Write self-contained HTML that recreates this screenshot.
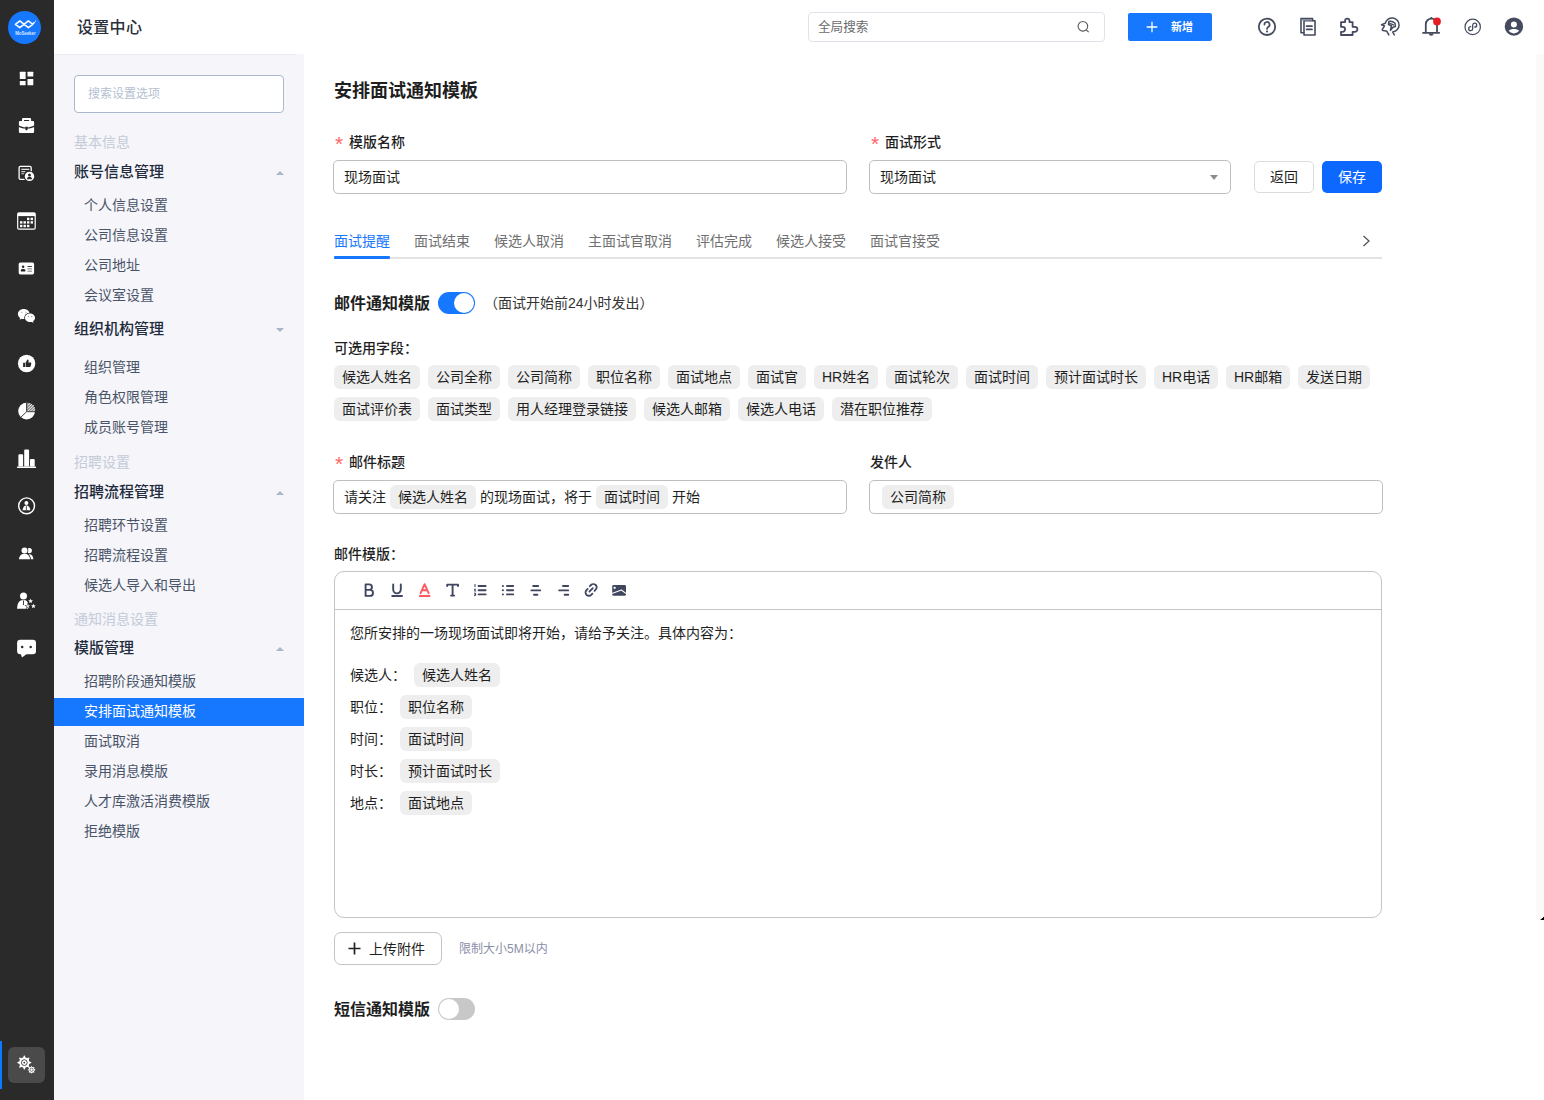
<!DOCTYPE html>
<html lang="zh-CN">
<head>
<meta charset="utf-8">
<title>设置中心</title>
<style>
*{box-sizing:border-box;margin:0;padding:0}
html,body{width:1544px;height:1100px;overflow:hidden;background:#fff}
body{font-family:"Liberation Sans","Noto Sans CJK SC",sans-serif;font-size:14px;color:#1f1f1f;position:relative}
.abs{position:absolute}
/* left dark nav */
#nav{position:absolute;left:0;top:0;width:54px;height:1100px;background:#2a2a2a}
#nav svg{position:absolute;display:block}
#logo{position:absolute;left:8px;top:11px;width:33px;height:33px;border-radius:50%;background:#1677ff}
#navact{position:absolute;left:8px;top:1047px;width:37px;height:36px;border-radius:6px;background:#4a4a4a}
#navbar{position:absolute;left:0;top:1041px;width:2px;height:48px;background:#0a7cff}
/* header */
#hdr{position:absolute;left:54px;top:0;width:1490px;height:54px;background:#fff}
#hdr h1{position:absolute;left:23px;top:1px;line-height:54px;font-size:16px;font-weight:500;color:#2b2f3a;letter-spacing:.3px}
#gsearch{position:absolute;left:754px;top:12px;width:297px;height:30px;border:1px solid #e0e3ea;border-radius:4px;font-size:12.600px;color:#6b6b6b;line-height:28px;padding-left:9px}
#addbtn{position:absolute;left:1074px;top:13px;width:84px;height:28px;background:#1677ff;border-radius:2px;color:#fff;font-size:11px;font-weight:700;line-height:28px}
/* side menu */
#side{position:absolute;left:54px;top:54px;width:250px;height:1046px;background:#f5f5fa}
#ssearch{position:absolute;left:20px;top:21px;width:210px;height:38px;border:1px solid #a9b8cf;border-radius:4px;background:#fff;font-size:12px;color:#b4bfd0;line-height:36px;padding-left:13px}
.grp{position:absolute;left:20px;font-size:14px;color:#c3cbd8;line-height:20px;white-space:nowrap}
.sec{position:absolute;left:20px;font-size:15px;font-weight:500;color:#222b3c;line-height:22px;white-space:nowrap}
.itm{position:absolute;left:30px;font-size:14px;color:#4a5468;line-height:20px;white-space:nowrap}
.tri{position:absolute;left:222px;width:0;height:0;border-left:4px solid transparent;border-right:4px solid transparent;margin-top:1px}
.tri.up{border-bottom:4px solid #a8b6ca}
.tri.dn{border-top:4px solid #a8b6ca}
#act{position:absolute;left:0;top:644px;width:250px;height:28px;background:#1677ff}
/* main */
#main{position:absolute;left:304px;top:54px;width:1232px;height:1046px;background:#fff}
.t{position:absolute;white-space:nowrap}
.lbl{position:absolute;font-size:14px;font-weight:500;color:#1f1f1f;line-height:20px;white-space:nowrap}
.req{position:absolute;left:1px;top:2px;color:#f66;font-weight:400;font-size:21px;line-height:20px;font-family:"Liberation Sans",sans-serif}
.lbl.r{padding-left:15px}
.inp{position:absolute;height:34px;border:1px solid #bfbfbf;border-radius:5px;background:#fff;font-size:14px;line-height:33px;padding-left:10px;color:#1f1f1f;white-space:nowrap}
.tag{position:absolute;height:24px;line-height:24px;background:#eeeeee;border-radius:6px;font-size:14px;color:#1f1f1f;padding:0 8px;white-space:nowrap}
.itag{display:inline-block;height:24px;line-height:24px;background:#eeeeee;border-radius:6px;font-size:14px;color:#1f1f1f;padding:0 8px;margin:0 4px;vertical-align:middle;position:relative;top:-1px}
.tab{position:absolute;top:177px;font-size:14px;color:#707070;line-height:20px;white-space:nowrap}
.sw{position:absolute;width:37px;height:22px;border-radius:11px}
.sw i{position:absolute;top:1px;width:20px;height:20px;border-radius:50%;background:#fff}
</style>
</head>
<body>
<div id="nav">
  <div id="logo"></div>
  <div id="navact"></div>
  <div id="navbar"></div>
  <svg class="abs" style="left:0;top:0" width="54" height="1100" viewBox="0 0 54 1100" fill="#fff" stroke="none">
    <!-- logo -->
    <path d="M24.200 24.300L19.800 20.900L15.400 24.300L19.800 27.700L28.400 20.900L32.800 24.300L28.400 27.700L24.200 24.300M31.600 25.300L34.200 22.600" fill="none" stroke="#fff" stroke-width="1.500" stroke-linejoin="round" stroke-linecap="round"/>
    <circle cx="35.500" cy="21.100" r=".600"/>
    <text x="15.200" y="34.600" font-family="Liberation Sans, sans-serif" font-size="4.600" font-weight="700" fill="#dbe9ff" textLength="20.400" lengthAdjust="spacingAndGlyphs">MoSeeker</text>
    <!-- 1 dashboard -->
    <rect x="19.800" y="71.800" width="5.800" height="7.300" rx=".500"/><rect x="19.800" y="81" width="5.800" height="4.300" rx=".500"/><rect x="27.500" y="71.800" width="5.800" height="4.700" rx=".500"/><rect x="27.500" y="78.900" width="5.800" height="6.400" rx=".500"/>
    <!-- 2 briefcase -->
    <path d="M22 121.200v-2a1.200 1.200 0 0 1 1.200-1.200h6.700a1.200 1.200 0 0 1 1.200 1.200v2h-2v-1.300h-5.100v1.300z"/>
    <path d="M20.100 120.900h12.800a1.200 1.200 0 0 1 1.200 1.200v3.500c-2.200 1.100-4.600 1.700-6.400 1.800v-.7h-2.400v.7c-1.800-.1-4.200-.7-6.400-1.800v-3.500a1.200 1.200 0 0 1 1.200-1.200z"/>
    <path d="M18.900 126.900c2.200 1 4.400 1.500 6.400 1.600v.9l1.200 1 1.200-1v-.9c2-.1 4.200-.6 6.400-1.600v4.800a1.200 1.200 0 0 1-1.200 1.200h-12.800a1.200 1.200 0 0 1-1.200-1.200z"/>
    <!-- 3 resume -->
    <rect x="19.100" y="166.400" width="12.100" height="13" rx="1.300" fill="none" stroke="#fff" stroke-width="1.300"/>
    <path d="M21.300 169.300h8" stroke="#fff" stroke-width="1.100"/><path d="M21.300 171.600h4M21.300 173.800h3" stroke="#cfcfcf" stroke-width="1.100"/>
    <circle cx="29.500" cy="176.400" r="5.700" fill="#2a2a2a"/><circle cx="29.500" cy="176.400" r="4.700"/>
    <circle cx="29.500" cy="174.900" r="1.500" fill="#2a2a2a"/><path d="M26.900 179.300c.2-1.700 1.200-2.500 2.600-2.500s2.400.8 2.600 2.500z" fill="#2a2a2a"/>
    <!-- 4 calendar -->
    <rect x="17.700" y="213" width="17.500" height="16.200" rx="1.200" fill="none" stroke="#fff" stroke-width="1.200"/><rect x="17.700" y="212.600" width="17.500" height="3.500"/>
    <g><rect x="27.0" y="217.7" width="2.400" height="2.400"/><rect x="30.6" y="217.7" width="2.400" height="2.400"/><rect x="20.0" y="221.2" width="2.400" height="2.400"/><rect x="23.5" y="221.2" width="2.400" height="2.400"/><rect x="27.0" y="221.2" width="2.400" height="2.400"/><rect x="30.6" y="221.2" width="2.400" height="2.400"/><rect x="20.0" y="224.8" width="2.400" height="2.400"/><rect x="23.5" y="224.8" width="2.400" height="2.400"/><rect x="27.0" y="224.8" width="2.400" height="2.400"/></g>
    <!-- 5 id card -->
    <rect x="18.700" y="262.500" width="15.400" height="11.900" rx="1.600"/>
    <circle cx="23.100" cy="266.700" r="1.250" fill="#2a2a2a"/><path d="M20.900 271.500v-1.200c0-.9.700-1.400 2.200-1.400s2.200.5 2.200 1.400v1.200z" fill="#2a2a2a"/>
    <path d="M27.500 266.500h4.400" stroke="#2a2a2a" stroke-width=".900"/><path d="M27.500 268.500h4.400M27.500 270h4.400M27.500 271.500h4.400" stroke="#9a9a9a" stroke-width=".900"/>
    <!-- 6 wechat -->
    <path d="M23.800 309c3.300 0 5.900 2.200 5.900 5s-2.600 5-5.900 5c-.7 0-1.400-.1-2-.3l-2.100 1.100.5-1.900c-1.400-.9-2.300-2.300-2.300-3.900 0-2.800 2.600-5 5.900-5z"/>
    <ellipse cx="30" cy="317.800" rx="5.800" ry="5.100" fill="#2a2a2a"/>
    <path d="M30 313.500c2.800 0 5 1.900 5 4.300 0 1.400-.7 2.600-1.900 3.400l.4 1.600-1.800-.9c-.5.100-1.100.2-1.700.2-2.800 0-5-1.900-5-4.300s2.200-4.300 5-4.300z"/>
    <circle cx="21.800" cy="312.500" r=".750" fill="#bbb"/><circle cx="25.900" cy="312.500" r=".750" fill="#bbb"/><circle cx="28.400" cy="316.500" r=".650" fill="#999"/><circle cx="31.700" cy="316.500" r=".650" fill="#999"/>
    <!-- 7 thumbs up -->
    <circle cx="26.600" cy="363.500" r="8.700"/>
    <path d="M23.100 362.700h1.900v4.300h-1.900zM25.600 367v-4.300l1.800-3.200c.9 0 1.400.6 1.200 1.500l-.3 1.500h2.100c.6 0 1 .5.900 1.100l-.6 2.600c-.1.500-.500.800-1 .8z" fill="#2a2a2a"/>
    <!-- 8 pie -->
    <circle cx="26.600" cy="411.100" r="8.400"/>
    <path d="M26.600 411.700v-9a8.400 8.400 0 0 1 8.400 9z" fill="#8d8d8d"/>
    <path d="M26.600 402.600v9.100h8.600M26.600 411.700l-5.800 5.600" fill="none" stroke="#2a2a2a" stroke-width=".900"/>
    <path d="M27.600 405.500l2-2M27.600 408.500l4.500-4.500M27.600 411.300l6.200-6.200M30.400 411.300l4.300-4.300M33 411.300l2-2" stroke="#fff" stroke-width=".800"/>
    <!-- 9 bars -->
    <path d="M18.400 466.600v-11.400a1 1 0 0 1 1-1h2.700a1 1 0 0 1 1 1v11.400zM24.200 466.600v-16.100a1 1 0 0 1 1-1h2.900a1 1 0 0 1 1 1v16.100zM30 466.600v-6.600a1 1 0 0 1 1-1h2.700a1 1 0 0 1 1 1v6.600z"/><rect x="17" y="466.500" width="19" height="1.500" rx=".500"/>
    <!-- 10 person in circle -->
    <circle cx="26.600" cy="505.800" r="7.900" fill="none" stroke="#fff" stroke-width="1.400"/>
    <circle cx="26.400" cy="502.900" r="2"/><path d="M22.600 510.300c.2-3 1.500-4.900 3.800-4.900s3.700 1.900 3.900 4.900z"/><path d="M26.400 506.200v4.100" stroke="#2a2a2a" stroke-width=".800"/>
    <!-- 11 users -->
    <circle cx="29.300" cy="550.600" r="2.600"/><path d="M27 559.300c.3-3.500 1.200-5 2.500-5 2 0 3.600 1.500 3.900 5z"/>
    <circle cx="24.500" cy="550.500" r="3.800" fill="#2a2a2a"/><path d="M18 560c.3-4.500 2.400-7.200 6.500-7.200s6.200 2.700 6.500 7.200z" fill="#2a2a2a"/>
    <circle cx="24.500" cy="550.500" r="3"/><path d="M18.900 559.300c.3-3.700 2.200-5.600 5.600-5.600s5.300 1.900 5.600 5.600z"/>
    <!-- 12 person stars -->
    <circle cx="23.500" cy="596" r="3.500"/><path d="M17.100 608.700c.2-5.500 2-8.700 6.400-8.700 3 0 4.700 2 4.700 4.500v4.200z"/><path d="M23.500 600.500v4.500" stroke="#2a2a2a" stroke-width=".900"/>
    <path d="M27.80 602.80L28.70 604.96L31.03 605.15L29.26 606.67L29.80 608.95L27.80 607.73L25.80 608.95L26.34 606.67L24.57 605.15L26.90 604.96Z" fill="#2a2a2a"/><path d="M30.60 597.70L31.50 599.86L33.83 600.05L32.06 601.57L32.60 603.85L30.60 602.63L28.60 603.85L29.14 601.57L27.37 600.05L29.70 599.86Z" fill="#2a2a2a"/>
    <path d="M30.60 598.60L31.26 600.19L32.98 600.33L31.67 601.45L32.07 603.12L30.60 602.23L29.13 603.12L29.53 601.45L28.22 600.33L29.94 600.19Z"/><path d="M33.40 603.70L34.06 605.29L35.78 605.43L34.47 606.55L34.87 608.22L33.40 607.33L31.93 608.22L32.33 606.55L31.02 605.43L32.74 605.29Z"/><path d="M27.80 603.70L28.46 605.29L30.18 605.43L28.87 606.55L29.27 608.22L27.80 607.33L26.33 608.22L26.73 606.55L25.42 605.43L27.14 605.29Z" fill="#ddd"/>
    <!-- 13 chat -->
    <path d="M20.300 639.700h12.500a3.200 3.200 0 0 1 3.200 3.200v8.100a3.200 3.200 0 0 1-3.200 3.200h-6.400l-4.400 3.400-1.100-3.400h-.6a3.200 3.200 0 0 1-3.200-3.200v-8.100a3.200 3.200 0 0 1 3.200-3.200z"/>
    <circle cx="22.200" cy="647" r="1.250" fill="#2a2a2a"/><circle cx="30.700" cy="647" r="1.250" fill="#2a2a2a"/>
    <!-- gear -->
    <path d="M29.03 1061.31L31.29 1062.22L31.29 1062.98L29.03 1063.89L28.56 1065.03L29.51 1067.27L28.97 1067.81L26.73 1066.86L25.59 1067.33L24.68 1069.59L23.92 1069.59L23.01 1067.33L21.87 1066.86L19.63 1067.81L19.09 1067.27L20.04 1065.03L19.57 1063.89L17.31 1062.98L17.31 1062.22L19.57 1061.31L20.04 1060.17L19.09 1057.93L19.63 1057.39L21.87 1058.34L23.01 1057.87L23.92 1055.61L24.68 1055.61L25.59 1057.87L26.73 1058.34L28.97 1057.39L29.51 1057.93L28.56 1060.17Z"/><circle cx="24.300" cy="1062.600" r="5"/>
    <circle cx="24.300" cy="1062.600" r="2.900" fill="none" stroke="#3a3a3a" stroke-width=".900"/><circle cx="24.300" cy="1062.600" r=".900" fill="#3a3a3a"/>
    <path d="M34.20 1069.09L35.39 1069.59L35.39 1070.01L34.20 1070.51L33.95 1071.14L34.43 1072.34L34.14 1072.63L32.94 1072.15L32.31 1072.40L31.81 1073.59L31.39 1073.59L30.89 1072.40L30.26 1072.15L29.06 1072.63L28.77 1072.34L29.25 1071.14L29.00 1070.51L27.81 1070.01L27.81 1069.59L29.00 1069.09L29.25 1068.46L28.77 1067.26L29.06 1066.97L30.26 1067.45L30.89 1067.20L31.39 1066.01L31.81 1066.01L32.31 1067.20L32.94 1067.45L34.14 1066.97L34.43 1067.26L33.95 1068.46Z"/><circle cx="31.600" cy="1069.800" r="2.800"/>
    <circle cx="31.600" cy="1069.800" r="1.600" fill="none" stroke="#4a4a4a" stroke-width=".700"/>
  </svg>
</div>
<div id="hdr">
  <h1>设置中心</h1>
  <div id="gsearch">全局搜索</div>
  <svg class="abs" style="left:1016px;top:17px" width="22" height="22" viewBox="1070 17 22 22" fill="none" stroke="#555" stroke-width="1.1"><circle cx="1082.9" cy="26.3" r="4.8"/><path d="M1086.3 29.8l2.4 2.4"/></svg>
  <svg class="abs" style="left:1196px;top:10px" width="290" height="34" viewBox="1250 10 290 34" fill="none" stroke="#454b5e" stroke-width="1.8" stroke-linecap="round" stroke-linejoin="round">
    <circle cx="1267" cy="26.8" r="8.2"/>
    <path d="M1264.4 24.6a2.6 2.6 0 1 1 3.8 2.3c-.9.5-1.2 1-1.2 2.1" stroke-width="1.7"/><path d="M1267 31.6h.1" stroke-width="2"/>
    <path d="M1304 20.8h11v14.2h-11z" stroke-width="1.6"/><path d="M1303.6 32.8h-2.6v-14.2h11.6v2" stroke-width="1.6"/><path d="M1301.400 19h10.600v1.700h-10.600z" fill="#8b90a0" stroke="none"/>
    <path d="M1306.6 26.2h5.4M1306.6 29.4h5.4" stroke-width="1.7"/>
    <path d="M1341 22.100h4.100v-1.200a2.200 2.200 0 1 1 4.400 0v1.200h3.100v4.700h2.300a2.500 2.500 0 0 1 0 5h-2.300v3.200h-11.600v-3.200h1.600a2.500 2.500 0 0 0 0-5h-1.600z" stroke-width="1.800"/>
    <g stroke-width="1.5"><path d="M1388.800 34.900L1386.900 31.400C1386 30.800 1385 30.900 1384.200 30.800C1382.800 30.600 1382 30.200 1382.300 29.500L1384.500 25.900L1381.500 24.700L1385.300 23.200A7 7 0 1 1 1392.600 31.900L1394.300 34.900"/><path d="M1388.800 21.500C1390.500 20.800 1393.500 21.800 1395.100 23.200L1395.400 26.500L1392.900 27.300L1390.500 30.300L1391.300 25.800L1388.500 24.500Z"/><path d="M1389.800 23.400L1393.500 24.900"/></g>
    <path d="M1425.800 32.600v-8.400a5.600 5.600 0 0 1 11.200 0v8.400M1423 32.800h16.200" stroke-width="1.8"/><path d="M1428.800 33.400a2.400 2.400 0 0 0 4.800 0z" fill="#454b5e" stroke="none"/><path d="M1430.600 18.200l.8-.6.800.6" stroke-width="1.2"/>
    <circle cx="1437" cy="21.400" r="3.900" fill="#e51c23" stroke="none"/>
    <circle cx="1472.700" cy="26.900" r="7.700" stroke-width="1.200"/>
    <path d="M1472.700 26.900v-1.900a2 2 0 1 1 2 2.100M1472.700 26.900v1.900a2 2 0 1 1-2-2.100" stroke-width="1.300"/>
    <circle cx="1513.900" cy="26.600" r="9.200" fill="#454b5e" stroke="none"/>
    <circle cx="1513.900" cy="24.400" r="3" fill="#fff" stroke="none"/>
    <path d="M1508.800 30.600c1-.9 2.800-1.500 5.100-1.500s4.100.6 5.100 1.500c-.9 1.700-2.800 2.800-5.100 2.800s-4.200-1.100-5.100-2.800z" fill="#fff" stroke="none"/>
  </svg>
  <div id="addbtn"><svg class="abs" style="left:18px;top:8px" width="12" height="12" viewBox="0 0 12 12"><path d="M6 .7v10.600M.7 6h10.600" stroke="#fff" stroke-width="1.300"/></svg><span style="position:absolute;left:43px">新增</span></div>
</div>
<div id="side">
  <div class="abs" style="left:0;top:0;width:241px;height:1px;background:#ebebf2"></div>
  <div id="ssearch">搜索设置选项</div>
  <div id="act"></div>
  <div class="grp" style="top:78px">基本信息</div>
  <div class="sec" style="top:107px">账号信息管理</div><div class="tri up" style="top:116px"></div>
  <div class="itm" style="top:141px">个人信息设置</div>
  <div class="itm" style="top:171px">公司信息设置</div>
  <div class="itm" style="top:201px">公司地址</div>
  <div class="itm" style="top:231px">会议室设置</div>
  <div class="sec" style="top:264px">组织机构管理</div><div class="tri dn" style="top:273px"></div>
  <div class="itm" style="top:303px">组织管理</div>
  <div class="itm" style="top:333px">角色权限管理</div>
  <div class="itm" style="top:363px">成员账号管理</div>
  <div class="grp" style="top:398px">招聘设置</div>
  <div class="sec" style="top:427px">招聘流程管理</div><div class="tri up" style="top:436px"></div>
  <div class="itm" style="top:461px">招聘环节设置</div>
  <div class="itm" style="top:491px">招聘流程设置</div>
  <div class="itm" style="top:521px">候选人导入和导出</div>
  <div class="grp" style="top:555px">通知消息设置</div>
  <div class="sec" style="top:583px">模版管理</div><div class="tri up" style="top:592px"></div>
  <div class="itm" style="top:617px">招聘阶段通知模版</div>
  <div class="itm" style="top:647px;color:#fff">安排面试通知模板</div>
  <div class="itm" style="top:677px">面试取消</div>
  <div class="itm" style="top:707px">录用消息模版</div>
  <div class="itm" style="top:737px">人才库激活消费模版</div>
  <div class="itm" style="top:767px">拒绝模版</div>
</div>
<div id="main">
  <div class="t" style="left:30px;top:25px;font-size:18px;font-weight:700;line-height:24px;color:#1f1f1f">安排面试通知模板</div>
  <div class="lbl r" style="left:30px;top:78px"><span class="req">*</span>模版名称</div>
  <div class="inp" style="left:29px;top:106px;width:514px">现场面试</div>
  <div class="lbl r" style="left:566px;top:78px"><span class="req">*</span>面试形式</div>
  <div class="inp" style="left:565px;top:106px;width:362px">现场面试<span style="position:absolute;left:340px;top:14px;width:0;height:0;border-left:4px solid transparent;border-right:4px solid transparent;border-top:5px solid #8c8c8c"></span></div>
  <div class="t" style="left:950px;top:107px;width:60px;height:32px;border:1px solid #dcdcdc;border-radius:5px;text-align:center;line-height:30px;font-size:14px;color:#1f1f1f">返回</div>
  <div class="t" style="left:1018px;top:107px;width:60px;height:32px;background:#0d68ff;border-radius:5px;text-align:center;line-height:32px;font-size:14px;color:#fff">保存</div>
  <div class="abs" style="left:30px;top:203px;width:1048px;height:2px;background:#e4e4e4"></div>
  <div class="tab" style="left:30px;color:#1677ff">面试提醒</div>
  <div class="tab" style="left:110px">面试结束</div>
  <div class="tab" style="left:190px">候选人取消</div>
  <div class="tab" style="left:284px">主面试官取消</div>
  <div class="tab" style="left:392px">评估完成</div>
  <div class="tab" style="left:472px">候选人接受</div>
  <div class="tab" style="left:566px">面试官接受</div>
  <div class="abs" style="left:30px;top:202px;width:56px;height:3px;background:#1677ff;border-radius:1px"></div>
  <svg class="abs" style="left:1056px;top:180px" width="12" height="14" viewBox="0 0 12 14"><path d="M3.5 2 L9 7 L3.5 12" fill="none" stroke="#555" stroke-width="1.3"/></svg>
  <div class="t" style="left:30px;top:239px;font-size:16px;font-weight:700;line-height:22px">邮件通知模版</div>
  <div class="sw" style="left:134px;top:238px;background:#1677ff"><i style="left:16px"></i></div>
  <div class="t" style="left:180px;top:239px;font-size:14px;line-height:20px;color:#333">（面试开始前24小时发出）</div>
  <div class="t" style="left:30px;top:284px;font-size:14px;font-weight:500;line-height:20px">可选用字段：</div>
  <div class="tag" style="left:30px;top:311px">候选人姓名</div>
  <div class="tag" style="left:124px;top:311px">公司全称</div>
  <div class="tag" style="left:204px;top:311px">公司简称</div>
  <div class="tag" style="left:284px;top:311px">职位名称</div>
  <div class="tag" style="left:364px;top:311px">面试地点</div>
  <div class="tag" style="left:444px;top:311px">面试官</div>
  <div class="tag" style="left:510px;top:311px">HR姓名</div>
  <div class="tag" style="left:582px;top:311px">面试轮次</div>
  <div class="tag" style="left:662px;top:311px">面试时间</div>
  <div class="tag" style="left:742px;top:311px">预计面试时长</div>
  <div class="tag" style="left:850px;top:311px">HR电话</div>
  <div class="tag" style="left:922px;top:311px">HR邮箱</div>
  <div class="tag" style="left:994px;top:311px">发送日期</div>
  <div class="tag" style="left:30px;top:343px">面试评价表</div>
  <div class="tag" style="left:124px;top:343px">面试类型</div>
  <div class="tag" style="left:204px;top:343px">用人经理登录链接</div>
  <div class="tag" style="left:340px;top:343px">候选人邮箱</div>
  <div class="tag" style="left:434px;top:343px">候选人电话</div>
  <div class="tag" style="left:528px;top:343px">潜在职位推荐</div>
  <div class="lbl r" style="left:30px;top:398px"><span class="req">*</span>邮件标题</div>
  <div class="inp" style="left:29px;top:426px;width:514px">请关注<span class="itag">候选人姓名</span>的现场面试，将于<span class="itag">面试时间</span>开始</div>
  <div class="lbl" style="left:566px;top:398px">发件人</div>
  <div class="inp" style="left:565px;top:426px;width:514px"><span class="itag" style="margin-left:2px">公司简称</span></div>
  <div class="t" style="left:30px;top:490px;font-size:14px;font-weight:500;line-height:20px">邮件模版：</div>
  <div class="abs" id="ed" style="left:30px;top:517px;width:1048px;height:347px;border:1px solid #c4c4c4;border-radius:10px"><div class="abs" style="left:0;top:37px;width:1046px;height:1px;background:#c4c4c4"></div></div>
  <svg class="abs" style="left:52px;top:520px" width="280" height="32" viewBox="356 574 280 32" fill="none" stroke="#40465f" stroke-width="1.9" stroke-linecap="round" stroke-linejoin="round">
    <path d="M365.6 584.4h3.6a2.7 2.7 0 0 1 0 5.5h-3.6zM365.6 589.9h4.4a3 3 0 0 1 0 6h-4.4z"/>
    <path d="M393.2 584.4v5.2a3.8 3.8 0 0 0 7.6 0v-5.2M392.2 596h9.8"/>
    <g stroke="#ff5a5f"><path d="M420.6 593.2l4-9 4 9M422.2 590.2h4.8M419.8 596h9.8"/></g>
    <path d="M447.2 586v-1.4h10.8v1.4M452.6 584.8v10.6M451 595.6h3.2"/>
    <g stroke-width="1.9"><path d="M478.6 586h7M478.6 590.2h7M478.6 594.4h7"/></g>
    <g stroke-width="1"><path d="M475 584.4v2.2M474.4 589.2h1.2l-1.2 1.8h1.4M474.4 593.2h1.2v2.4h-1.2M474.8 594.4h.8"/></g>
    <g stroke-width="1.9"><path d="M507 586h6.2M507 590.2h6.2M507 594.4h6.2"/><path d="M502.8 586h.2M502.8 590.2h.2M502.8 594.4h.2"/></g>
    <g stroke-width="1.9"><path d="M533.2 586h5M531.4 590.4h8.8M534 594.8h3.4"/></g>
    <g stroke-width="1.9"><path d="M563 586h5.2M559.2 590.4h9M564.6 594.8h3.6"/></g>
    <g stroke-width="1.8"><path d="M589.8 586.2l1.2-1.2a3.3 3.3 0 0 1 4.7 4.7l-1.2 1.2M592.4 593.6l-1.2 1.2a3.3 3.3 0 0 1-4.7-4.7l1.2-1.2M589.4 591.6l3.4-3.4"/></g>
    <path d="M613.6 585h11a1.4 1.4 0 0 1 1.4 1.4v8a1.4 1.4 0 0 1-1.4 1.4h-11a1.4 1.4 0 0 1-1.4-1.4v-8a1.4 1.4 0 0 1 1.4-1.4z" fill="#40465f" stroke="none"/>
    <path d="M612 593.4l9.4-3.4 4.8 3.6" stroke="#fff" stroke-width="1.1" stroke-linecap="butt"/>
    <rect x="613.6" y="586.8" width="2" height="2" fill="#fff" stroke="none"/>
  </svg>
  <div class="t" style="left:46px;top:569px;font-size:14px;line-height:20px">您所安排的一场现场面试即将开始，请给予关注。具体内容为：</div>
  <div class="t" style="left:46px;top:611px;font-size:14px;line-height:20px">候选人：</div><div class="tag" style="left:110px;top:609px">候选人姓名</div>
  <div class="t" style="left:46px;top:643px;font-size:14px;line-height:20px">职位：</div><div class="tag" style="left:96px;top:641px">职位名称</div>
  <div class="t" style="left:46px;top:675px;font-size:14px;line-height:20px">时间：</div><div class="tag" style="left:96px;top:673px">面试时间</div>
  <div class="t" style="left:46px;top:707px;font-size:14px;line-height:20px">时长：</div><div class="tag" style="left:96px;top:705px">预计面试时长</div>
  <div class="t" style="left:46px;top:739px;font-size:14px;line-height:20px">地点：</div><div class="tag" style="left:96px;top:737px">面试地点</div>
  <div class="t" style="left:30px;top:878px;width:108px;height:33px;border:1px solid #c4c4c4;border-radius:7px;font-size:14px;line-height:33px;padding-left:34px">上传附件</div>
  <svg class="abs" style="left:44px;top:888px" width="13" height="13" viewBox="0 0 13 13"><path d="M6.5 0.5v12M0.5 6.5h12" stroke="#222" stroke-width="1.7"/></svg>
  <div class="t" style="left:155px;top:886px;font-size:12px;line-height:18px;color:#8a8fa8">限制大小5M以内</div>
  <div class="t" style="left:30px;top:945px;font-size:16px;font-weight:700;line-height:22px">短信通知模版</div>
  <div class="sw" style="left:134px;top:944px;background:#c8c8c8"><i style="left:1px"></i></div>
</div>
<div id="sb" style="position:absolute;left:1536px;top:54px;width:8px;height:866px;background:#fafafa"><svg class="abs" style="left:3px;top:861px" width="5" height="5" viewBox="0 0 5 5"><path d="M1 5L5 1.500V5z" fill="#000"/><path d="M.6 4.700L5 .900" stroke="#fff" stroke-width=".800" fill="none"/></svg></div>
</body>
</html>
